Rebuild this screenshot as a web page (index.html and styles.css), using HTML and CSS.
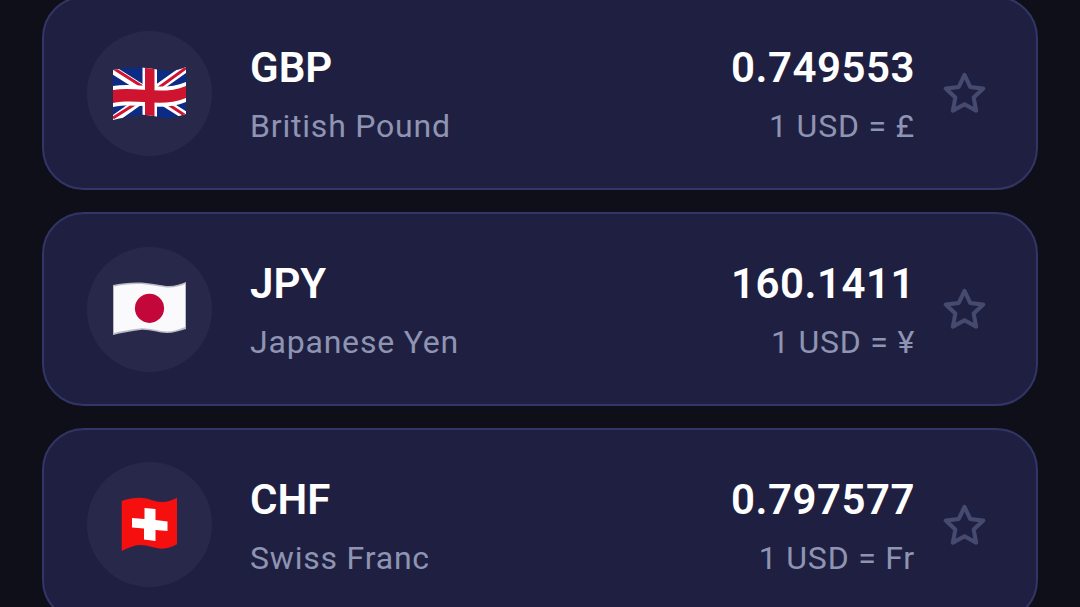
FILE: index.html
```html
<!DOCTYPE html>
<html lang="en">
<head>
<meta charset="utf-8">
<title>Rates</title>
<link rel="stylesheet" href="styles.css">
</head>
<body>
<svg class="defs" width="0" height="0" aria-hidden="true">
  <defs>
    <path id="wave" d="M0 4C10 2 22 1 33 2C45 3 50 5 56 5C62 5 68 3 73 1V48C66 50 60 52 54 52C45 52 36 48 27 49C18 50 8 52 0 54Z"/>
    <clipPath id="waveClip"><use href="#wave"/></clipPath>
    <symbol id="star" viewBox="0 0 24 24"><path d="M12 2.9l2.8 5.9 6.4.8-4.7 4.4 1.2 6.4L12 17.3l-5.7 3.1 1.2-6.4-4.7-4.4 6.4-.8z" fill="none" stroke="#454a6e" stroke-width="2" stroke-linejoin="round"/></symbol>
  </defs>
</svg>
<main class="list">
  <article class="card">
    <div class="avatar">
      <svg class="flag flag-uk" width="73" height="56" viewBox="0 0 73 56">
        <g clip-path="url(#waveClip)">
          <rect width="73" height="56" fill="#0b2b85"/>
          <path d="M0 4L73 50M0 54L73 2" stroke="#fff" stroke-width="8" fill="none"/>
          <path d="M0 2L30 21M44 31L73 50M0 52L30 33M44 23L73 2" stroke="#cf1430" stroke-width="3" fill="none"/>
          <path d="M0 20C24 16 50 26 73 16V36C50 46 24 36 0 41Z" fill="#fff"/>
          <rect x="29.5" y="0" width="14.5" height="56" fill="#fff"/>
          <path d="M0 24C24 20 50 30 73 20V32C50 42 24 32 0 37Z" fill="#cf1430"/>
          <rect x="32" y="0" width="9.5" height="56" fill="#cf1430"/>
        </g>
      </svg>
    </div>
    <div class="names">
      <h2 class="code">GBP</h2>
      <p class="name">British Pound</p>
    </div>
    <div class="rates">
      <p class="rate">0.749553</p>
      <p class="unit">1 USD = £</p>
    </div>
    <svg class="star" width="49" height="49"><use href="#star"/></svg>
  </article>
  <article class="card">
    <div class="avatar">
      <svg class="flag" width="73" height="56" viewBox="0 0 73 56">
        <use href="#wave" fill="#babbc6"/>
        <path d="M1 5.5C10 3.5 22 2.5 33 3.5C45 4.5 50 6.5 56 6.5C62 6.5 67 5 72 3V46C66 48.500 60 50.500 54 50.500C45 50.500 36 46.500 27 47.500C18 48.500 8 50 1 52Z" fill="#fafafc"/>
        <circle cx="36.500" cy="27.300" r="14.600" fill="#c4073a"/>
      </svg>
    </div>
    <div class="names">
      <h2 class="code">JPY</h2>
      <p class="name">Japanese Yen</p>
    </div>
    <div class="rates">
      <p class="rate">160.1411</p>
      <p class="unit">1 USD = ¥</p>
    </div>
    <svg class="star" width="49" height="49"><use href="#star"/></svg>
  </article>
  <article class="card">
    <div class="avatar">
      <svg class="flag" width="57" height="56" viewBox="0 0 57 56">
        <path d="M0.700 4C7 1.500 13 0.700 19 0.700C27 0.700 34 5 41 5C46 5 51 3.500 56 0.700V47.300C51 50 46 51.700 41 51.700C34 51.700 27 48 19 48C13 48 7 51 0.700 54Z" fill="#f50f0f"/>
        <path d="M23.500 11L34.500 12V23L46.500 24.500V34L34.500 33V44L23 42.500V31.500L11 30.500V21L23.500 22Z" fill="#fff"/>
      </svg>
    </div>
    <div class="names">
      <h2 class="code">CHF</h2>
      <p class="name">Swiss Franc</p>
    </div>
    <div class="rates">
      <p class="rate">0.797577</p>
      <p class="unit">1 USD = Fr</p>
    </div>
    <svg class="star" width="49" height="49"><use href="#star"/></svg>
  </article>
</main>
</body>
</html>
```
FILE: styles.css
```css
* { box-sizing: border-box; }
html, body { margin: 0; height: 100%; }
body {
  background: #0f0f1a;
  font-family: Roboto, sans-serif;
  overflow: hidden;
}
.defs { display: block; height: 0; }
.list {
  display: flex;
  flex-direction: column;
  gap: 21.75px;
  margin-top: -3.75px;
  padding: 0 42px;
}
.card {
  display: flex;
  align-items: center;
  height: 194px;
  flex: none;
  padding: 0 47px 0 43px;
  background: #1f2041;
  border: 2px solid #333566;
  border-radius: 42px;
}
.avatar {
  width: 125px;
  height: 125px;
  flex: none;
  display: flex;
  align-items: center;
  justify-content: center;
  border-radius: 50%;
  background: #28294a;
}
.flag-uk { margin-top: 1px; }
.names { margin: 0 0 2px 38px; flex: 1; }
.code, .name, .rate, .unit { margin: 0; }
.code {
  font-size: 42px;
  line-height: 58px;
  font-weight: 600;
  color: #fff;
}
.name {
  margin-top: 10px;
  font-size: 32px;
  line-height: 38px;
  letter-spacing: 0.8px;
  color: #8e94b2;
}
.rates { margin-bottom: 2px; text-align: right; }
.rate {
  font-size: 42px;
  line-height: 58px;
  font-weight: 600;
  letter-spacing: 0.5px;
  color: #fff;
}
.unit {
  margin-top: 10px;
  font-size: 32px;
  line-height: 38px;
  letter-spacing: 0.8px;
  color: #8e94b2;
}
.star { margin: 1px 0 0 25px; flex: none; }
```
